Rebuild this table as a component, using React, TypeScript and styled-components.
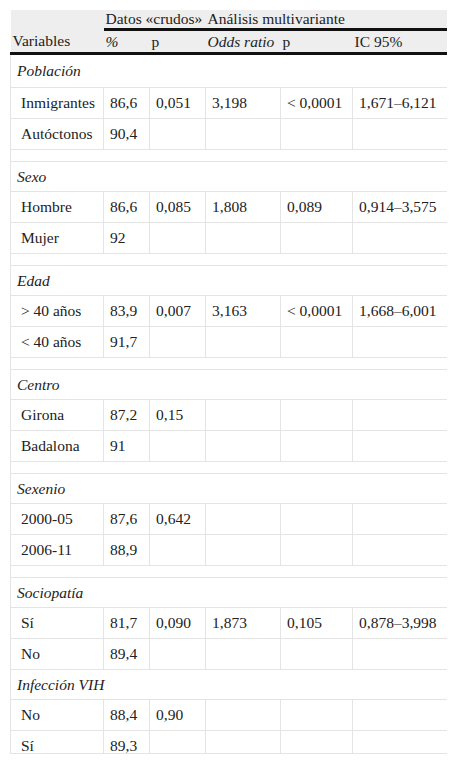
import React from 'react';
import styled, { createGlobalStyle } from 'styled-components';

type DataRow = {
  label: string;
  pct: string;
  p?: string;
  odds?: string;
  p2?: string;
  ic?: string;
};

type Group = {
  title: string;
  rows: DataRow[];
  spacer: boolean;
};

const colWidths = [93, 46, 56, 75, 72, 95];

const groups: Group[] = [
  {
    title: 'Población',
    spacer: true,
    rows: [
      { label: 'Inmigrantes', pct: '86,6', p: '0,051', odds: '3,198', p2: '< 0,0001', ic: '1,671–6,121' },
      { label: 'Autóctonos', pct: '90,4' },
    ],
  },
  {
    title: 'Sexo',
    spacer: true,
    rows: [
      { label: 'Hombre', pct: '86,6', p: '0,085', odds: '1,808', p2: '0,089', ic: '0,914–3,575' },
      { label: 'Mujer', pct: '92' },
    ],
  },
  {
    title: 'Edad',
    spacer: true,
    rows: [
      { label: '> 40 años', pct: '83,9', p: '0,007', odds: '3,163', p2: '< 0,0001', ic: '1,668–6,001' },
      { label: '< 40 años', pct: '91,7' },
    ],
  },
  {
    title: 'Centro',
    spacer: true,
    rows: [
      { label: 'Girona', pct: '87,2', p: '0,15' },
      { label: 'Badalona', pct: '91' },
    ],
  },
  {
    title: 'Sexenio',
    spacer: true,
    rows: [
      { label: '2000-05', pct: '87,6', p: '0,642' },
      { label: '2006-11', pct: '88,9' },
    ],
  },
  {
    title: 'Sociopatía',
    spacer: false,
    rows: [
      { label: 'Sí', pct: '81,7', p: '0,090', odds: '1,873', p2: '0,105', ic: '0,878–3,998' },
      { label: 'No', pct: '89,4' },
    ],
  },
  {
    title: 'Infección VIH',
    spacer: false,
    rows: [
      { label: 'No', pct: '88,4', p: '0,90' },
      { label: 'Sí', pct: '89,3' },
    ],
  },
];

const App: React.FC = () => {
  return (
    <Page>
      <GlobalStyle />
      <TableFrame>
        <Table>
          <colgroup>
            {colWidths.map((w, i) => (
              <Col key={i} $w={w} />
            ))}
          </colgroup>
          <thead>
            <tr>
              <HeadCell />
              <HeadCell colSpan={2} $rule>
                Datos «crudos»
              </HeadCell>
              <HeadCell colSpan={3} $rule>
                Análisis multivariante
              </HeadCell>
            </tr>
            <tr>
              <HeadCell $bottom>Variables</HeadCell>
              <HeadCell $bottom>
                <em>%</em>
              </HeadCell>
              <HeadCell $bottom>p</HeadCell>
              <HeadCell $bottom>
                <em>Odds ratio</em>
              </HeadCell>
              <HeadCell $bottom>p</HeadCell>
              <HeadCell $bottom>IC 95%</HeadCell>
            </tr>
          </thead>
          <tbody>
            {groups.map((g, gi) => (
              <React.Fragment key={g.title}>
                <tr>
                  <GroupCell colSpan={6} $first={gi === 0}>
                    {g.title}
                  </GroupCell>
                </tr>
                {g.rows.map((r) => (
                  <tr key={r.label}>
                    <LabelCell>{r.label}</LabelCell>
                    <Cell>{r.pct}</Cell>
                    <Cell>{r.p}</Cell>
                    <Cell>{r.odds}</Cell>
                    <Cell>{r.p2}</Cell>
                    <Cell>{r.ic}</Cell>
                  </tr>
                ))}
                {g.spacer && (
                  <tr>
                    <SpacerCell colSpan={6} />
                  </tr>
                )}
              </React.Fragment>
            ))}
          </tbody>
        </Table>
      </TableFrame>
    </Page>
  );
};

const GlobalStyle = createGlobalStyle`
  html, body {
    margin: 0;
    padding: 0;
    background: #ffffff;
  }
`;

const Page = styled.div`
  padding: 10px 0 0 10px;
`;

const TableFrame = styled.div`
  width: 437px;
  height: 743px;
  overflow: hidden;
  border-bottom: 1px solid #e4e4e4;
`;

const Table = styled.table`
  width: 437px;
  table-layout: fixed;
  border-collapse: collapse;
  border-spacing: 0;
  font-family: 'Liberation Serif', 'Times New Roman', serif;
  font-size: 15.5px;
  color: #222222;

  th,
  td {
    font-family: 'Liberation Serif', 'Times New Roman', serif;
    font-size: 15.5px;
    line-height: 18px;
    box-sizing: border-box;
  }
`;

const Col = styled.col<{ $w: number }>`
  width: ${({ $w }) => $w}px;
`;

const HeadCell = styled.th<{ $rule?: boolean; $bottom?: boolean }>`
  background: #eeeeee;
  font-weight: normal;
  text-align: left;
  white-space: nowrap;
  padding: 0 2px;
  height: ${({ $bottom }) => ($bottom ? '24px' : '19px')};
  vertical-align: ${({ $bottom }) => ($bottom ? 'middle' : 'top')};
  border-bottom: ${({ $rule, $bottom }) =>
    $rule || $bottom ? '3px solid #111111' : '0'};

  em {
    font-style: italic;
  }
`;

const GroupCell = styled.td<{ $first?: boolean }>`
  height: ${({ $first }) => ($first ? '34px' : '30px')};
  padding: 0 6px;
  font-style: italic;
  border: 1px solid #e4e4e4;
  border-top: ${({ $first }) => ($first ? '3px solid #111111' : '1px solid #e4e4e4')};
  vertical-align: middle;
`;

const Cell = styled.td`
  height: 31px;
  padding: 0 6px;
  border: 1px solid #e4e4e4;
  white-space: nowrap;
  vertical-align: middle;
`;

const LabelCell = styled(Cell)`
  padding-left: 10px;
`;

const SpacerCell = styled.td`
  height: 12px;
  padding: 0;
  border: 1px solid #e4e4e4;
`;

export default App;
